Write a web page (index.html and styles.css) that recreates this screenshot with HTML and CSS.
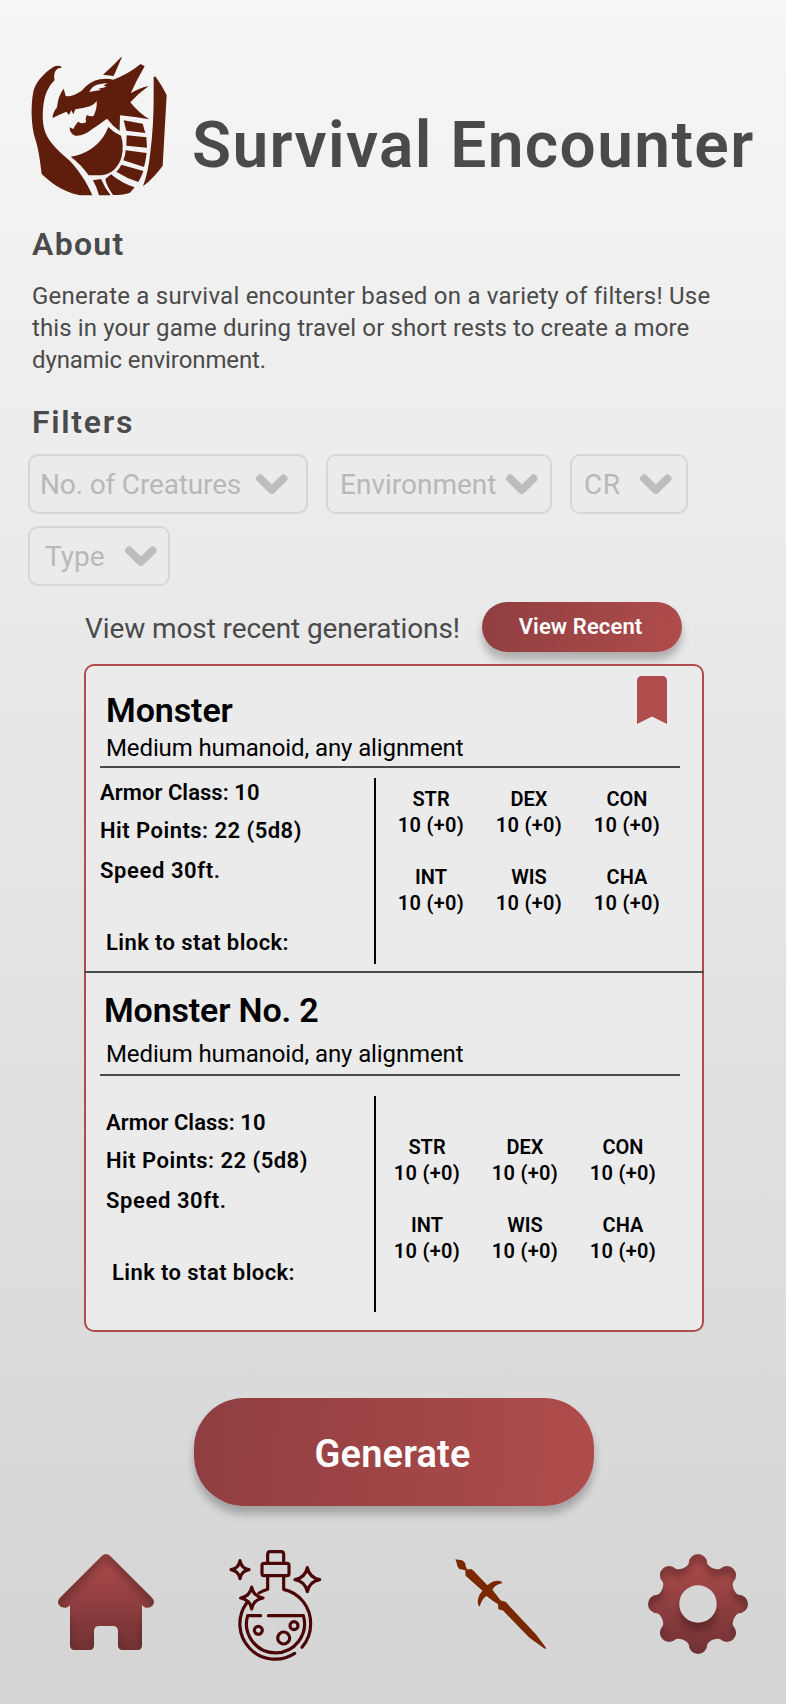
FILE: index.html
```html
<!DOCTYPE html>
<html lang="en">
<head>
<meta charset="utf-8">
<title>Survival Encounter</title>
<link rel="stylesheet" href="styles.css">
</head>
<body>
<header class="header">
  <svg class="logo" viewBox="0 0 480 480" aria-hidden="true">
    <path d="M125 66Q115 58 100 66C70 85 45 115 40 140C32 180 33 240 45 280C55 310 60 345 65 387C90 410 125 440 180 451H217C200 410 175 375 150 348C110 315 80 285 72 250C65 215 68 170 80 140Q88 120 104 105C100 90 104 75 116 69Q122 71 125 66Z"/>
    <path d="M401 96Q405 92 409 98Q425 120 440 150L428 362Q405 395 369 424Q385 380 390 330Q402 240 401 140Z"/>
    <path d="M306 36L281 93L249 89Q280 62 303 37Z"/>
    <path fill-rule="evenodd" d="M98 219Q97 205 111 187Q115 150 131 131L137 153Q155 157 185 137Q210 108 240 103Q262 99 280 104Q325 87 362 57L374 64Q350 105 332 145Q355 130 386 123Q355 145 331 172Q355 203 388 223Q345 215 300 211L299 258Q280 245 261 221Q235 240 220 250Q190 275 165 272Q148 265 149 247L160 252Q168 235 175 230Q185 238 198 232Q195 222 200 210Q215 217 221 212Q232 190 230 168Q222 180 210 184Q190 190 166 193L160 208L154 196L147 210L139 200Q115 210 98 219ZM208 141Q215 122 240 117L262 114L250 122L260 123Q250 130 245 129L235 131L243 135Q230 137 208 141Z"/>
    <path d="M265 246Q280 262 303 272Q312 300 305 335Q290 385 243 391L206 391Q185 360 152 335Q215 325 250 275Q260 260 265 246Z"/>
    <path d="M311 226L368 236L376 264L319 257ZM320 271L379 277L381 308L319 302ZM317 316L380 324Q377 350 372 366L310 346Q317 330 317 316ZM304 359L370 378Q364 396 355 411Q320 400 289 380Q298 372 304 359ZM273 388Q305 415 344 427L330 443Q312 450 279 450Q258 420 256 402ZM219 406L243 402Q255 430 272 451L237 451Q230 425 219 406Z"/>
  </svg>
  <h1 class="title">Survival Encounter</h1>
</header>
<main class="main">
  <section class="about">
    <h2 class="heading heading-about">About</h2>
    <p class="lead"><span class="l1">Generate a survival encounter based on a variety of filters! Use</span><br><span class="l2">this in your game during travel or short rests to create a more</span><br><span class="l3">dynamic environment.</span></p>
  </section>
  <h2 class="heading heading-filters">Filters</h2>
  <div class="filters">
    <div class="filter filter-count"><span>No. of Creatures</span><svg class="chev" viewBox="0 0 32 21"><path d="M4.200 4.500L15.800 16L27.500 4.500"/></svg></div>
    <div class="filter filter-env"><span>Environment</span><svg class="chev" viewBox="0 0 32 21"><path d="M4.200 4.500L15.800 16L27.500 4.500"/></svg></div>
    <div class="filter filter-cr"><span>CR</span><svg class="chev" viewBox="0 0 32 21"><path d="M4.200 4.500L15.800 16L27.500 4.500"/></svg></div>
    <div class="filter filter-type"><span>Type</span><svg class="chev" viewBox="0 0 32 21"><path d="M4.200 4.500L15.800 16L27.500 4.500"/></svg></div>
  </div>
  <div class="recent">
    <span class="recent-text">View most recent generations!</span>
    <button class="btn btn-recent">View Recent</button>
  </div>
  <div class="card">
    <svg class="bookmark" viewBox="0 0 30 48"><path d="M0 48V5Q0 0 5 0H25Q30 0 30 5V48L15 40.500Z"/></svg>
    <article class="monster">
      <div class="monster-head">
        <h3 class="name">Monster</h3>
        <p class="kind">Medium humanoid, any alignment</p>
      </div>
      <div class="monster-body">
        <div class="facts">
          <p class="armor">Armor Class: 10</p>
          <p class="hit">Hit Points: 22 (5d8)</p>
          <p class="speed">Speed 30ft.</p>
          <p class="link">Link to stat block:</p>
        </div>
        <div class="stats">
          <div><b>STR</b><span>10 (+0)</span></div>
          <div><b>DEX</b><span>10 (+0)</span></div>
          <div><b>CON</b><span>10 (+0)</span></div>
          <div><b>INT</b><span>10 (+0)</span></div>
          <div><b>WIS</b><span>10 (+0)</span></div>
          <div><b>CHA</b><span>10 (+0)</span></div>
        </div>
      </div>
    </article>
    <article class="monster second">
      <div class="monster-head">
        <h3 class="name">Monster No. 2</h3>
        <p class="kind">Medium humanoid, any alignment</p>
      </div>
      <div class="monster-body">
        <div class="facts">
          <p class="armor">Armor Class: 10</p>
          <p class="hit">Hit Points: 22 (5d8)</p>
          <p class="speed">Speed 30ft.</p>
          <p class="link">Link to stat block:</p>
        </div>
        <div class="stats">
          <div><b>STR</b><span>10 (+0)</span></div>
          <div><b>DEX</b><span>10 (+0)</span></div>
          <div><b>CON</b><span>10 (+0)</span></div>
          <div><b>INT</b><span>10 (+0)</span></div>
          <div><b>WIS</b><span>10 (+0)</span></div>
          <div><b>CHA</b><span>10 (+0)</span></div>
        </div>
      </div>
    </article>
  </div>
  <button class="btn btn-generate">Generate</button>
</main>
<nav class="nav">
  <svg class="nav-home" viewBox="54 72 288 288">
    <defs>
      <linearGradient id="redFade" x1="0" y1="0" x2="0" y2="1"><stop offset="0" stop-color="#b04c4c"/><stop offset="1" stop-color="#713133"/></linearGradient>
      <filter id="inner" x="-10%" y="-10%" width="120%" height="120%" color-interpolation-filters="sRGB">
        <feComponentTransfer in="SourceAlpha" result="inv"><feFuncA type="linear" slope="-1" intercept="1"/></feComponentTransfer>
        <feOffset in="inv" dy="24" result="off"/>
        <feGaussianBlur in="off" stdDeviation="12" result="blur"/>
        <feComposite in="blur" in2="SourceAlpha" operator="in" result="cut"/>
        <feComponentTransfer in="cut" result="shade"><feFuncA type="linear" slope=".25"/></feComponentTransfer>
        <feMerge><feMergeNode in="SourceGraphic"/><feMergeNode in="shade"/></feMerge>
      </filter>
    </defs>
    <path fill="url(#redFade)" filter="url(#inner)" d="M186 77Q198 67 210 77L336 203Q346 214 339 225Q328 239 311 230L306 225V346Q306 360 292 360H248Q234 360 234 346V304Q234 288 218 288H178Q162 288 162 304V346Q162 360 148 360H104Q90 360 90 346V225L85 230Q68 239 57 225Q50 214 60 203Z"/>
  </svg>
  <svg class="nav-potion" viewBox="566 56 279 336">
    <path d="M682 98V72Q682 64 690 64H722Q730 64 730 72V98M682 138V177Q668 181 656 188M730 138V177C780 188 811 232 811 280Q811 320 785 351M619 218A106 106 0 0 0 763 369M661 256H622A87 87 0 1 0 789 256H684"/>
    <rect x="665" y="99" width="81" height="37" rx="6"/>
    <circle cx="654" cy="300" r="12"/><circle cx="730" cy="323" r="18"/><circle cx="761" cy="286" r="12"/>
    <path d="M599 91Q603 114 626 118Q603 122 599 145Q595 122 572 118Q595 114 599 91ZM801 112Q807 142 838 148Q807 154 801 184Q795 154 764 148Q795 142 801 112ZM634 170Q639 198 668 203Q639 208 634 236Q629 208 601 203Q629 198 634 170Z"/>
  </svg>
  <svg class="nav-sword" viewBox="45 85 278 276">
    <path d="M46 88L66 91Q77 96 77 107L81 118L95 118Q102 122 108 130L143 166Q163 149 184 154L188 160Q166 163 158 180L178 206L182 212L199 217L212 232L290 315L318 352L321 359L314 357L270 325L190 243L176 239L175 224L160 214L140 199Q126 208 120 230L117 230Q107 208 128 183L77 138L76 121L58 117Q50 110 50 98Z"/>
  </svg>
  <svg class="nav-gear" viewBox="-152 -152 304 304">
    <path fill="url(#redFade)" fill-rule="evenodd" filter="url(#inner)" d="M-28-124A28 28 0 0 1 28-124C31-112 57.300-101.100 67.900-107.500A28 28 0 0 1 107.500-67.900C101.100-57.300 112-31 124-28A28 28 0 0 1 124 28C112 31 101.100 57.300 107.500 67.900A28 28 0 0 1 67.900 107.500C57.300 101.100 31 112 28 124A28 28 0 0 1-28 124C-31 112-57.300 101.100-67.900 107.500A28 28 0 0 1-107.500 67.900C-101.100 57.300-112 31-124 28A28 28 0 0 1-124-28C-112-31-101.100-57.300-107.500-67.900A28 28 0 0 1-67.900-107.500C-57.300-101.100-31-112-28-124ZM57 0A57 57 0 1 0-57 0A57 57 0 1 0 57 0Z"/>
  </svg>
</nav>
</body>
</html>
```

FILE: styles.css
```css
* { box-sizing: border-box; }
body {
  margin: 0;
  width: 786px;
  height: 1704px;
  overflow: hidden;
  background: linear-gradient(180deg, #f6f6f6 0%, #ebebeb 32%, #d4d4d4 100%);
  color: #4a4a4a;
  font-family: Roboto, "Liberation Sans", sans-serif;
}
h1, h2, h3, p { margin: 0; }
span, h1, h2, h3, p, button { white-space: nowrap; }

.header { display: flex; padding: 45px 0 0 20px; }
.logo { flex: none; width: 160px; height: 160px; fill: #5f1d0b; }
.title { margin: 69px 0 0 12px; font-size: 64px; line-height: 64px; font-weight: 600; letter-spacing: 1.4px; }

.about { padding: 19px 0 0 32px; }
.heading { font-size: 32px; line-height: 40px; font-weight: 600; }
.heading-about { letter-spacing: 1.3px; }
.lead { margin-top: 16px; font-size: 24px; line-height: 32px; }
.l1 { letter-spacing: .23px; }
.l2 { letter-spacing: .12px; }
.l3 { letter-spacing: -.1px; }
.heading-filters { padding: 26px 0 1px 32px; letter-spacing: 1.7px; }

.filters { display: flex; flex-wrap: wrap; gap: 12px 18px; padding: 11px 90px 0 28px; }
.filter {
  display: flex;
  align-items: center;
  justify-content: space-between;
  height: 60px;
  border: 2px solid #d6d6d6;
  border-radius: 10px;
  background: #ebebeb;
  color: #b8b8b8;
  font-size: 28px;
}
.filter-count { width: 280px; padding: 0 18px 0 10px; letter-spacing: -.15px; }
.filter-env { width: 226px; padding: 0 12px 0 12px; }
.filter-cr { width: 118px; padding: 0 14px 0 12px; letter-spacing: .5px; }
.filter-type { width: 142px; padding: 0 11px 0 15px; }
.chev { flex: none; width: 32px; height: 21px; fill: none; stroke: #bdbdbd; stroke-width: 8; stroke-linecap: round; stroke-linejoin: round; }

.recent { display: flex; align-items: center; padding: 16px 104px 0 85px; justify-content: space-between; }
.recent-text { padding-top: 2px; font-size: 28px; letter-spacing: -.1px; }
.btn {
  border: 0;
  padding: 0;
  color: #fff;
  font-family: inherit;
  font-weight: 600;
  background: linear-gradient(100deg, #8f3e40, #b04c4c);
  box-shadow: 0 8px 8px rgba(0, 0, 0, .25);
}
.btn-recent { width: 200px; height: 50px; padding: 0 3px 1px 0; border-radius: 25px; font-size: 22px; letter-spacing: .12px; }

.card {
  position: relative;
  width: 620px;
  height: 668px;
  margin: 12px 0 0 84px;
  border: 2px solid #b04c4c;
  border-radius: 10px;
  background: #ebebeb;
  color: #000;
}
.bookmark { position: absolute; top: 10px; right: 35px; width: 30px; height: 48px; fill: #b04c4c; }
.monster { height: 307px; margin: 0 -2px; padding: 24px 24px 0 16px; border-bottom: 2px solid #4a4a4a; }
.monster-head { border-bottom: 2px solid #4a4a4a; padding: 0 0 2px 6px; }
.name { font-size: 34px; line-height: 40px; font-weight: 600; letter-spacing: -.1px; }
.kind { margin-top: 2px; font-size: 24px; line-height: 32px; letter-spacing: -.11px; }
.monster-body { display: flex; align-items: flex-start; }
.facts { width: 276px; height: 186px; margin-top: 10px; border-right: 2px solid #000; font-size: 22px; line-height: 38px; font-weight: 600; }
.armor { margin-top: -4px; letter-spacing: .06px; }
.hit { letter-spacing: .48px; }
.speed { margin-top: 2px; letter-spacing: .6px; }
.link { margin: 34px 0 0 6px; letter-spacing: .42px; }
.stats { display: grid; grid-template-columns: repeat(3, 98px); row-gap: 26px; margin: 18px 0 0 6px; font-size: 20px; line-height: 26px; font-weight: 600; text-align: center; }
.stats b, .stats span { display: block; font-weight: 600; }
.stats span { letter-spacing: .3px; }

.second { height: auto; padding-top: 17px; border-bottom: 0; }
.second .name { margin-left: -2px; letter-spacing: -.17px; }
.second .kind { margin-top: 8px; }
.second .monster-head { padding-bottom: 4px; }
.second .facts { height: 216px; margin-top: 20px; padding-left: 6px; }
.second .armor { margin-top: 8px; }
.second .stats { margin: 58px 0 0 2px; }

.btn-generate { display: block; width: 400px; height: 108px; margin: 66px 0 0 194px; padding: 3px 3px 0 0; border-radius: 50px; font-size: 38px; letter-spacing: .18px; background: linear-gradient(95deg, #8f3e40, #b04c4c); }

.nav { display: flex; align-items: flex-start; padding: 43px 38px 0 58px; }
.nav-home { width: 96px; height: 96px; margin-top: 5px; }
.nav-potion { width: 93px; height: 112px; margin-left: 75px; fill: none; stroke: #4a0507; stroke-width: 9.5; stroke-linecap: round; stroke-linejoin: round; }
.nav-sword { width: 92px; height: 92px; margin: 9px 0 0 133px; fill: #7a2800; }
.nav-gear { width: 100px; height: 100px; margin: 5px 0 0 101px; }
```
